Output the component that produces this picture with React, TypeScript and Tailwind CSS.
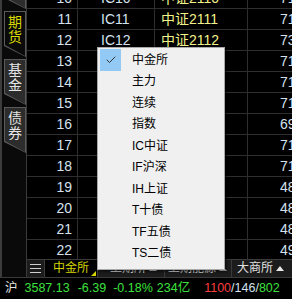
import { Check } from 'lucide-react';

const rows = [
  { no: 10, code: 'IC10', name: '中证2110', px: '7106.0' },
  { no: 11, code: 'IC11', name: '中证2111', px: '7118.2' },
  { no: 12, code: 'IC12', name: '中证2112', px: '7302.4' },
  { no: 13, code: 'IF10', name: '沪深2110', px: '7121.6' },
  { no: 14, code: 'IF11', name: '沪深2111', px: '7135.0' },
  { no: 15, code: 'IF12', name: '沪深2112', px: '7140.8' },
  { no: 16, code: 'IH10', name: '上证2110', px: '6912.2' },
  { no: 17, code: 'IH11', name: '上证2111', px: '7105.4' },
  { no: 18, code: 'IH12', name: '上证2112', px: '7110.6' },
  { no: 19, code: 'T2112', name: '十债2112', px: '4876.0' },
  { no: 20, code: 'T2203', name: '十债2203', px: '4871.2' },
  { no: 21, code: 'TF2112', name: '五债2112', px: '4888.8' },
  { no: 22, code: 'TF2203', name: '五债2203', px: '4902.4' },
];

const menuItems = ['中金所', '主力', '连续', '指数', 'IC中证', 'IF沪深', 'IH上证', 'T十债', 'TF五债', 'TS二债'];

export default function App() {
  return (
    <div className="relative w-[292px] h-[299px] overflow-hidden bg-black font-['Liberation_Sans','Noto_Sans_CJK_SC',sans-serif]">
      <div className="flex h-[277px]">
        {/* Side tabs */}
        <div className="w-[27px] flex-none flex bg-[#0a0a0a] border-r border-[#3a3a3a]">
          <div className="w-[2px] bg-[#3c3c3c]" />
          <div className="flex flex-col gap-[2px] mt-[-37px] ml-[2px]">
            <SideTab label="" />
            <SideTab label="期货" active />
            <SideTab label="基金" />
            <SideTab label="债券" />
          </div>
        </div>

        {/* Quote table */}
        <div className="flex-1 flex flex-col min-w-0">
          <div className="h-[259px] overflow-hidden">
            <div className="mt-[-12px]">
              {rows.map(r => (
                <div key={r.no} className="flex h-[21px] border-b border-[#2e2e2e] text-[14px] leading-[20px]">
                  <div className="w-[51px] flex-none border-r border-[#2e2e2e] text-right pr-[5px] text-[#d4e2f0]">{r.no}</div>
                  <div className="w-[77px] flex-none border-r border-[#2e2e2e] pl-[23px] text-[#d4e2f0] whitespace-nowrap">{r.code}</div>
                  <div className="w-[93px] flex-none border-r border-[#2e2e2e] pl-[6px] text-[#f2f28a] whitespace-nowrap">{r.name}</div>
                  <div className="flex-1 pl-[32px] text-[#d4e2f0] whitespace-nowrap overflow-hidden">{r.px}</div>
                </div>
              ))}
            </div>
          </div>

          {/* Exchange tabs */}
          <div className="h-[18px] flex bg-[#1c1c1c] border-t border-[#3a3a3a] text-[12px] leading-[17px] whitespace-nowrap">
            <div className="w-[18px] flex-none flex flex-col justify-center items-center gap-[3px] border-r border-[#3a3a3a]">
              <div className="w-[11px] h-[1px] bg-[#d0d0d0]" />
              <div className="w-[11px] h-[1px] bg-[#d0d0d0]" />
              <div className="w-[11px] h-[1px] bg-[#d0d0d0]" />
            </div>
            <div className="relative w-[53px] flex-none bg-black border-r border-[#3a3a3a] pl-[8px] text-[#d4d400]">
              中金所
              <div className="absolute right-[1px] bottom-[1px] w-0 h-0 border-l-[5px] border-l-transparent border-b-[5px] border-b-[#d4d400]" />
            </div>
            <div className="w-[67px] flex-none border-r border-[#3a3a3a] pl-[12px] text-[#e0e0e0] flex items-center gap-[3px]">
              <span>上期所</span>
              <Caret />
            </div>
            <div className="w-[67px] flex-none border-r border-[#3a3a3a] pl-[3px] text-[#e0e0e0] flex items-center gap-[3px]">
              <span>上期能源</span>
              <Caret />
            </div>
            <div className="flex-1 pl-[5px] text-[#e0e0e0] flex items-center gap-[3px]">
              <span>大商所</span>
              <Caret />
            </div>
          </div>
        </div>
      </div>

      {/* Status line */}
      <div className="h-[22px] flex items-center border-t border-[#3a3a3a] bg-black text-[12.5px] whitespace-nowrap">
        <span className="ml-[5px] text-[#e6e6e6]">沪</span>
        <span className="ml-[7px] text-[#3ee03e]">3587.13</span>
        <span className="ml-[8px] text-[#3ee03e]">-6.39</span>
        <span className="ml-[7px] text-[#3ee03e]">-0.18%</span>
        <span className="ml-[4px] text-[#3ee03e]">234亿</span>
        <span className="ml-[14px] text-[#ff3c3c]">1100</span>
        <span className="text-[#d4e2f0]">/146/</span>
        <span className="text-[#3ee03e]">802</span>
      </div>

      {/* Context menu */}
      <div className="absolute left-[97px] top-[47px] w-[128px] h-[223px] bg-[#f0f0f0] border border-[#a8a8a8] shadow-[2px_2px_2px_rgba(0,0,0,0.5)] pt-[1px] pl-[2px]">
        {menuItems.map((m, i) => (
          <div key={m} className="flex items-center h-[21.5px] text-[12px] text-black">
            <div className={`w-[21px] h-[21.5px] flex items-center justify-center ${i === 0 ? 'bg-[#92c9f5]' : ''}`}>
              {i === 0 && <Check size={12} strokeWidth={2} className="text-[#333]" />}
            </div>
            <span className="ml-[11px]">{m}</span>
          </div>
        ))}
      </div>
    </div>
  );
}

function Caret() {
  return <div className="w-0 h-0 mb-[1px] border-l-[4.5px] border-r-[4.5px] border-b-[5px] border-l-transparent border-r-transparent border-b-[#e8e8e8]" />;
}

function SideTab({ label, active = false }: { label: string; active?: boolean }) {
  return (
    <div className="w-[22px] h-[46px] bg-[#5a5a5a] [clip-path:polygon(0_0,100%_0,100%_100%,0_calc(100%-11px))]">
      <div
        className={`mx-[1px] mt-[1px] h-[44px] flex flex-col items-center pt-[3px] text-[14px] leading-[15px] [clip-path:polygon(0_0,100%_0,100%_100%,0_calc(100%-11px))] ${
          active ? 'bg-[#0a0a0a] text-[#d8d800]' : 'bg-[#2c2c2c] text-[#e4e4e4]'
        }`}
      >
        {label.split('').map(c => (
          <span key={c}>{c}</span>
        ))}
      </div>
    </div>
  );
}
